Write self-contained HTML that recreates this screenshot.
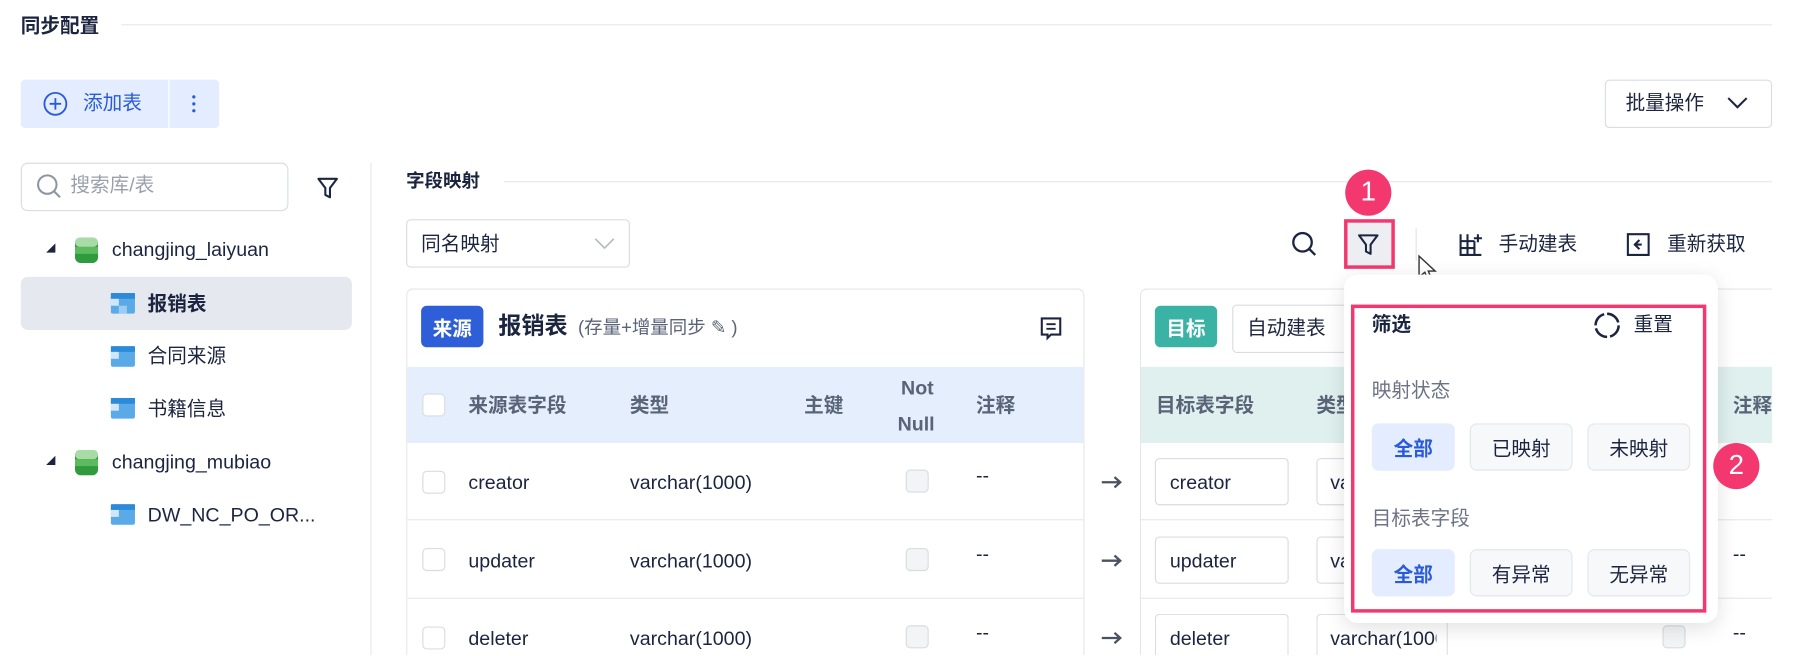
<!DOCTYPE html>
<html><head><meta charset="utf-8"><style>
*{box-sizing:border-box;margin:0;padding:0}
html,body{width:1809px;height:656px;overflow:hidden;background:#fff}
#w{position:absolute;left:0;top:0;width:1568px;height:568px;overflow:hidden;transform:scale(1.1537);transform-origin:0 0;font-family:"Liberation Sans","Noto Sans CJK SC",sans-serif;color:#1c2540;font-size:17px}
.a{position:absolute}
.t{position:absolute;white-space:nowrap;line-height:1}
.b{font-weight:bold}
.hl{position:absolute;height:1px;background:#e6e8ee}
.g{color:#5a6478}
.cb{position:absolute;width:20px;height:20px;border:1px solid #d9dce3;border-radius:4px;background:#fff}
.cbg{background:#f3f4f6}
.inp{position:absolute;border:1px solid #d9dce3;border-radius:4px;background:#fff}
.btn{position:absolute;border:1px solid #e3e6ec;border-radius:6px;background:#f7f8fa;display:flex;align-items:center;justify-content:center;font-size:17px;color:#1c2540}
.on{background:#e3edff;border-color:#e3edff;color:#2a5bd7;font-weight:bold}
.badge{position:absolute;width:40px;height:40px;border-radius:50%;background:#f2386f;color:#fff;font-size:24px;display:flex;align-items:center;justify-content:center}
.ar{position:absolute;width:20px;height:12px}
</style></head><body><div id="w">
<div class="t b" style="left:18px;top:14px;font-size:17px">同步配置</div>
<div class="hl" style="left:105px;top:21px;width:1431px"></div>

<div class="a" style="left:18px;top:69px;width:172px;height:42px;background:#e3edff;border-radius:4px"></div>
<div class="a" style="left:146px;top:69px;width:1px;height:42px;background:#fff"></div>
<svg class="a" style="left:37px;top:79px" width="22" height="22" viewBox="0 0 22 22"><circle cx="11" cy="11" r="9.5" fill="none" stroke="#2a5bd7" stroke-width="1.6"/><path d="M11 6v10M6 11h10" stroke="#2a5bd7" stroke-width="1.6"/></svg>
<div class="t" style="left:72px;top:81px;color:#2a5bd7">添加表</div>
<svg class="a" style="left:165px;top:82px" width="6" height="16"><circle cx="3" cy="2" r="1.4" fill="#2a5bd7"/><circle cx="3" cy="8" r="1.4" fill="#2a5bd7"/><circle cx="3" cy="14" r="1.4" fill="#2a5bd7"/></svg>
<div class="a" style="left:1391px;top:69px;width:145px;height:42px;border:1px solid #d9dce3;border-radius:4px"></div>
<div class="t" style="left:1409px;top:81px">批量操作</div>
<svg class="a" style="left:1496px;top:82px" width="20" height="14"><path d="M2 3l8 8 8-8" fill="none" stroke="#1c2540" stroke-width="1.8"/></svg>

<div class="inp" style="left:18px;top:141px;width:232px;height:42px;border-radius:6px"></div>
<svg class="a" style="left:31px;top:150px" width="24" height="24"><circle cx="10" cy="10" r="8" fill="none" stroke="#8d95a5" stroke-width="1.8"/><path d="M16 16l5 5" stroke="#8d95a5" stroke-width="1.8"/></svg>
<div class="t" style="left:61px;top:152px;color:#9aa1ae">搜索库/表</div>
<svg class="a" style="left:274px;top:152px" width="20" height="22"><path d="M2 3h16l-6 8v8l-4-2v-6z" fill="none" stroke="#1c2540" stroke-width="1.8" stroke-linejoin="round"/></svg>
<div class="a" style="left:321px;top:141px;width:1px;height:427px;background:#e6e8ee"></div>

<svg class="a" style="left:39px;top:210px" width="10" height="10"><path d="M1 9h8V1z" fill="#1c2540"/></svg>
<svg class="a" style="left:65px;top:206px" width="20" height="22"><rect x="0" y="0" width="20" height="22" rx="5" fill="#2f9a3e"/><rect x="0" y="0" width="20" height="8" rx="4" fill="#a8dca6"/><rect x="0" y="8" width="20" height="6" fill="#5cbb5e"/></svg>
<div class="t" style="left:97px;top:208px">changjing_laiyuan</div>
<div class="a" style="left:18px;top:240px;width:287px;height:46px;background:#e6e8ef;border-radius:6px"></div>
<svg class="a" style="left:96px;top:254px" width="21" height="18"><rect width="21" height="18" rx="2" fill="#5aaae8"/><rect y="0" width="21" height="5" fill="#2c8ad9"/><rect x="0" y="5" width="7" height="6" fill="#cfe6fb"/><rect x="7" y="11" width="7" height="7" fill="#9ccbf4"/></svg>
<div class="t b" style="left:128px;top:255px">报销表</div>
<svg class="a" style="left:96px;top:300px" width="21" height="18"><rect width="21" height="18" rx="2" fill="#5aaae8"/><rect width="21" height="5" fill="#2c8ad9"/><rect y="5" width="7" height="6" fill="#cfe6fb"/></svg>
<div class="t" style="left:128px;top:300px">合同来源</div>
<svg class="a" style="left:96px;top:345px" width="21" height="18"><rect width="21" height="18" rx="2" fill="#5aaae8"/><rect width="21" height="5" fill="#2c8ad9"/><rect y="5" width="7" height="6" fill="#cfe6fb"/></svg>
<div class="t" style="left:128px;top:346px">书籍信息</div>
<svg class="a" style="left:39px;top:394px" width="10" height="10"><path d="M1 9h8V1z" fill="#1c2540"/></svg>
<svg class="a" style="left:65px;top:390px" width="20" height="22"><rect width="20" height="22" rx="5" fill="#2f9a3e"/><rect width="20" height="8" rx="4" fill="#a8dca6"/><rect y="8" width="20" height="6" fill="#5cbb5e"/></svg>
<div class="t" style="left:97px;top:392px">changjing_mubiao</div>
<svg class="a" style="left:96px;top:437px" width="21" height="18"><rect width="21" height="18" rx="2" fill="#5aaae8"/><rect width="21" height="5" fill="#2c8ad9"/><rect y="5" width="7" height="6" fill="#cfe6fb"/></svg>
<div class="t" style="left:128px;top:438px">DW_NC_PO_OR...</div>

<div class="t b" style="left:352px;top:150px;font-size:16px">字段映射</div>
<div class="hl" style="left:437px;top:157px;width:1099px"></div>
<div class="inp" style="left:352px;top:190px;width:194px;height:42px"></div>
<div class="t" style="left:365px;top:203px">同名映射</div>
<svg class="a" style="left:515px;top:205px" width="18" height="12"><path d="M1 2l8 8 8-8" fill="none" stroke="#b3b9c5" stroke-width="1.4"/></svg>

<svg class="a" style="left:1119px;top:200px" width="24" height="24"><circle cx="10" cy="10" r="8" fill="none" stroke="#1c2540" stroke-width="2"/><path d="M16 16l5 5" stroke="#1c2540" stroke-width="2"/></svg>
<div class="a" style="left:1165px;top:190px;width:44px;height:43px;background:#eceef2;border:3px solid #f2386f"></div>
<svg class="a" style="left:1176px;top:201px" width="20" height="22"><path d="M2 3h16l-6 8v8l-4-2v-6z" fill="none" stroke="#1c2540" stroke-width="1.8" stroke-linejoin="round"/></svg>
<div class="badge" style="left:1166px;top:147px">1</div>
<div class="a" style="left:1227px;top:198px;width:1px;height:28px;background:#dfe2e8"></div>
<svg class="a" style="left:1228px;top:220px" width="18" height="26"><path d="M2 2v18l5-4 3 7 3-1-3-7h6z" fill="#fff" stroke="#333" stroke-width="1.2"/></svg>
<svg class="a" style="left:1264px;top:201px" width="22" height="22"><path d="M2 2v18h18M2 8h12M2 14h12M8 2v18M14 8v12M17 2v7M13.5 5.5h7" fill="none" stroke="#1c2540" stroke-width="1.8"/></svg>
<div class="t" style="left:1299px;top:203px">手动建表</div>
<svg class="a" style="left:1409px;top:201px" width="22" height="22"><path d="M2 2h18v18H2z" fill="none" stroke="#1c2540" stroke-width="1.8"/><path d="M12 7l-4 4 4 4M8 11h6" fill="none" stroke="#1c2540" stroke-width="1.8"/></svg>
<div class="t" style="left:1445px;top:203px">重新获取</div>

<!-- source card -->
<div class="a" style="left:352px;top:250px;width:588px;height:318px;border:1px solid #e3e6ec;border-bottom:none;border-radius:6px 6px 0 0"></div>
<div class="a" style="left:365px;top:265px;width:54px;height:36px;background:#2f5fd8;border-radius:5px;color:#fff;font-weight:bold;display:flex;align-items:center;justify-content:center">来源</div>
<div class="t b" style="left:432px;top:273px;font-size:20px">报销表</div>
<div class="t g" style="left:501px;top:277px;font-size:16px">(存量+增量同步 ✎ )</div>
<svg class="a" style="left:901px;top:274px" width="20" height="22"><path d="M2 2h16v14h-8l-3 3v-3H2z" fill="none" stroke="#1c2540" stroke-width="1.8"/><path d="M6 7h8M6 11h8" stroke="#1c2540" stroke-width="1.6"/></svg>
<div class="a" style="left:353px;top:318px;width:586px;height:66px;background:#e5eefd"></div>
<div class="cb" style="left:366px;top:341px"></div>
<div class="t b g" style="left:406px;top:343px">来源表字段</div>
<div class="t b g" style="left:546px;top:343px">类型</div>
<div class="t b g" style="left:697px;top:343px">主键</div>
<div class="t b g" style="left:781px;top:328px">Not</div>
<div class="t b g" style="left:778px;top:359px">Null</div>
<div class="t b g" style="left:846px;top:343px">注释</div>
<div class="hl" style="left:353px;top:450px;width:586px"></div>
<div class="hl" style="left:353px;top:518px;width:586px"></div>
<div class="cb" style="left:366px;top:408px"></div><div class="t" style="left:406px;top:410px">creator</div><div class="t" style="left:546px;top:410px">varchar(1000)</div><div class="cb cbg" style="left:785px;top:407px"></div><div class="t" style="left:846px;top:404px">--</div>
<div class="cb" style="left:366px;top:475px"></div><div class="t" style="left:406px;top:478px">updater</div><div class="t" style="left:546px;top:478px">varchar(1000)</div><div class="cb cbg" style="left:785px;top:475px"></div><div class="t" style="left:846px;top:472px">--</div>
<div class="cb" style="left:366px;top:543px"></div><div class="t" style="left:406px;top:545px">deleter</div><div class="t" style="left:546px;top:545px">varchar(1000)</div><div class="cb cbg" style="left:785px;top:542px"></div><div class="t" style="left:846px;top:540px">--</div>
<svg class="ar" style="left:954px;top:412px"><path d="M1 6h16M12 1.5l5 4.5-5 4.5" fill="none" stroke="#4a5263" stroke-width="2"/></svg>
<svg class="ar" style="left:954px;top:480px"><path d="M1 6h16M12 1.5l5 4.5-5 4.5" fill="none" stroke="#4a5263" stroke-width="2"/></svg>
<svg class="ar" style="left:954px;top:547px"><path d="M1 6h16M12 1.5l5 4.5-5 4.5" fill="none" stroke="#4a5263" stroke-width="2"/></svg>

<!-- target card -->
<div class="a" style="left:988px;top:250px;width:548px;height:318px;overflow:hidden">
<div class="a" style="left:0;top:0;width:620px;height:330px;border:1px solid #e3e6ec;border-radius:6px"></div>
<div class="a" style="left:1px;top:68px;width:600px;height:66px;background:#dff0ee"></div>
<div class="hl" style="left:1px;top:200px;width:600px"></div>
<div class="hl" style="left:1px;top:268px;width:600px"></div>
</div>
<div class="a" style="left:1001px;top:265px;width:54px;height:36px;background:#3ab3a4;border-radius:5px;color:#fff;font-weight:bold;display:flex;align-items:center;justify-content:center">目标</div>
<div class="inp" style="left:1068px;top:264px;width:110px;height:42px"></div>
<div class="t" style="left:1081px;top:276px">自动建表</div>
<div class="t b g" style="left:1002px;top:343px">目标表字段</div>
<div class="t b g" style="left:1141px;top:343px">类型</div>
<div class="t b g" style="left:1502px;top:343px;width:34px;overflow:hidden">注释</div>
<div class="inp" style="left:1001px;top:397px;width:116px;height:41px"></div><div class="t" style="left:1014px;top:410px">creator</div>
<div class="inp" style="left:1141px;top:397px;width:114px;height:41px"></div><div class="t" style="left:1153px;top:410px">va</div>
<div class="inp" style="left:1001px;top:465px;width:116px;height:41px"></div><div class="t" style="left:1014px;top:478px">updater</div>
<div class="inp" style="left:1141px;top:465px;width:114px;height:41px"></div><div class="t" style="left:1153px;top:478px">va</div>
<div class="inp" style="left:1001px;top:532px;width:116px;height:36px;border-bottom:none;border-radius:4px 4px 0 0"></div><div class="t" style="left:1014px;top:545px">deleter</div>
<div class="inp" style="left:1141px;top:532px;width:114px;height:36px;border-bottom:none;border-radius:4px 4px 0 0"></div><div class="t" style="left:1153px;top:545px;width:92px;overflow:hidden">varchar(1000)</div>
<div class="cb cbg" style="left:1441px;top:542px"></div>
<div class="t" style="left:1502px;top:472px">--</div>
<div class="t" style="left:1502px;top:540px">--</div>
<div class="t" style="left:1502px;top:404px">--</div>

<!-- popup -->
<div class="a" style="left:1165px;top:238px;width:324px;height:302px;background:#fff;border-radius:12px;box-shadow:0 4px 18px rgba(0,0,0,.12)"></div>
<div class="a" style="left:1171px;top:264px;width:308px;height:267px;border:3px solid #f2386f"></div>
<div class="t b" style="left:1189px;top:273px">筛选</div>
<svg class="a" style="left:1381px;top:270px" width="24" height="24"><path d="M12 2a10 10 0 0 1 10 10M22 12a10 10 0 0 1-10 10M12 22A10 10 0 0 1 2 12M2 12A10 10 0 0 1 12 2" fill="none" stroke="#1c2540" stroke-width="2.2" stroke-dasharray="13 2.7"/></svg>
<div class="t" style="left:1416px;top:273px">重置</div>
<div class="t" style="left:1189px;top:330px;color:#6b7385">映射状态</div>
<div class="btn on" style="left:1189px;top:367px;width:72px;height:41px">全部</div>
<div class="btn" style="left:1274px;top:367px;width:89px;height:41px">已映射</div>
<div class="btn" style="left:1376px;top:367px;width:89px;height:41px">未映射</div>
<div class="t" style="left:1189px;top:441px;color:#6b7385">目标表字段</div>
<div class="btn on" style="left:1189px;top:476px;width:72px;height:41px">全部</div>
<div class="btn" style="left:1274px;top:476px;width:89px;height:41px">有异常</div>
<div class="btn" style="left:1376px;top:476px;width:89px;height:41px">无异常</div>
<div class="badge" style="left:1485px;top:384px">2</div>
</div></body></html>
